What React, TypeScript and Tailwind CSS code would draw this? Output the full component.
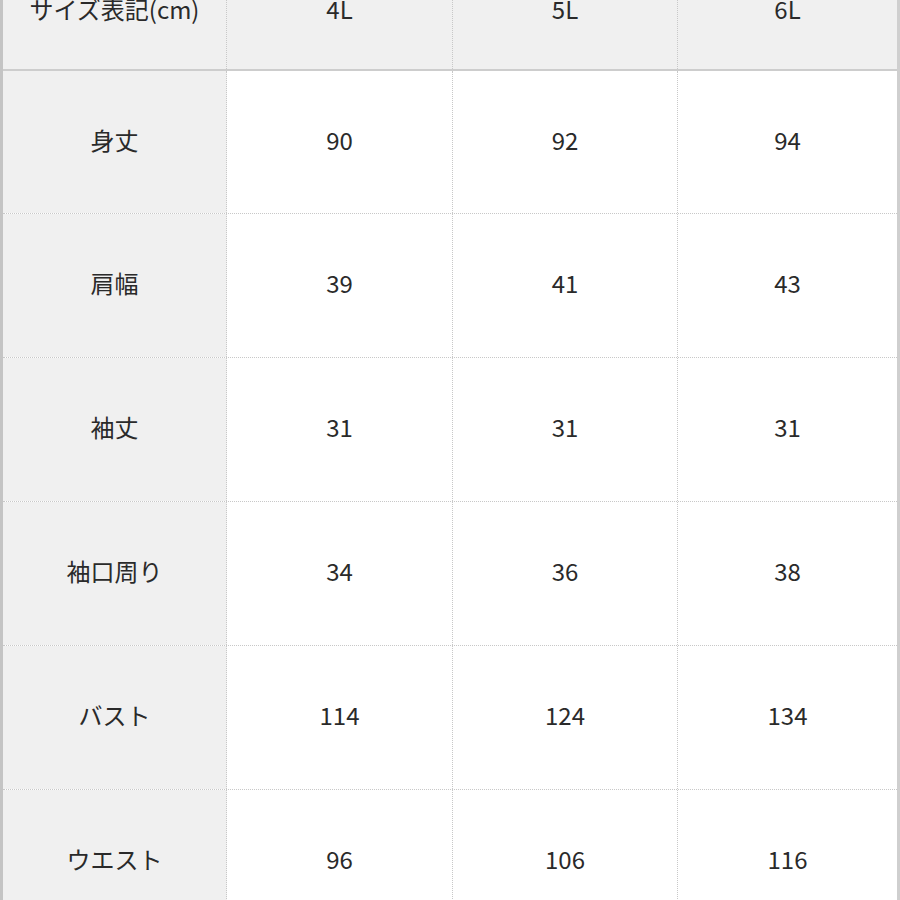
import React from "react";

const rows: { label: string; values: string[] }[] = [
  { label: "身丈", values: ["90", "92", "94"] },
  { label: "肩幅", values: ["39", "41", "43"] },
  { label: "袖丈", values: ["31", "31", "31"] },
  { label: "袖口周り", values: ["34", "36", "38"] },
  { label: "バスト", values: ["114", "124", "134"] },
  { label: "ウエスト", values: ["96", "106", "116"] },
];

const colW = ["w-[224px]", "w-[226px]", "w-[225px]", "w-[219px]"];

export default function App() {
  return (
    <div
      className="w-[900px] h-[900px] overflow-hidden bg-white text-[#2a2a2a] text-[24px]"
      style={{ fontFamily: '"Noto Sans CJK JP", "Noto Sans", sans-serif' }}
    >
      <div className="-mt-[45px] border-l-[3px] border-r-[3px] border-l-[#c4c4c4] border-r-[#cfcfcf] w-[900px]">
        {/* header */}
        <div className="flex h-[116px] border-b-2 border-b-[#cdcdcd] bg-[#f0f0f0]">
          <div className={`${colW[0]} flex items-center justify-center pb-[6px] border-r border-dotted border-r-[#c8c8c8]`}>
            サイズ表記(cm)
          </div>
          {["4L", "5L", "6L"].map((h, i) => (
            <div
              key={h}
              className={`${colW[i + 1]} flex items-center justify-center pb-[6px] ${i < 2 ? "border-r border-dotted border-r-[#c8c8c8]" : ""}`}
            >
              {h}
            </div>
          ))}
        </div>
        {rows.map((r, ri) => (
          <div
            key={r.label}
            className={`flex ${ri === 0 ? "h-[143px]" : "h-[144px]"} border-b border-dotted border-b-[#c8c8c8]`}
          >
            <div className={`${colW[0]} bg-[#f0f0f0] flex items-center justify-center pb-[5px] border-r border-dotted border-r-[#c8c8c8]`}>
              {r.label}
            </div>
            {r.values.map((v, i) => (
              <div
                key={i}
                className={`${colW[i + 1]} flex items-center justify-center pb-[5px] ${i < 2 ? "border-r border-dotted border-r-[#c8c8c8]" : ""}`}
              >
                {v}
              </div>
            ))}
          </div>
        ))}
      </div>
    </div>
  );
}
